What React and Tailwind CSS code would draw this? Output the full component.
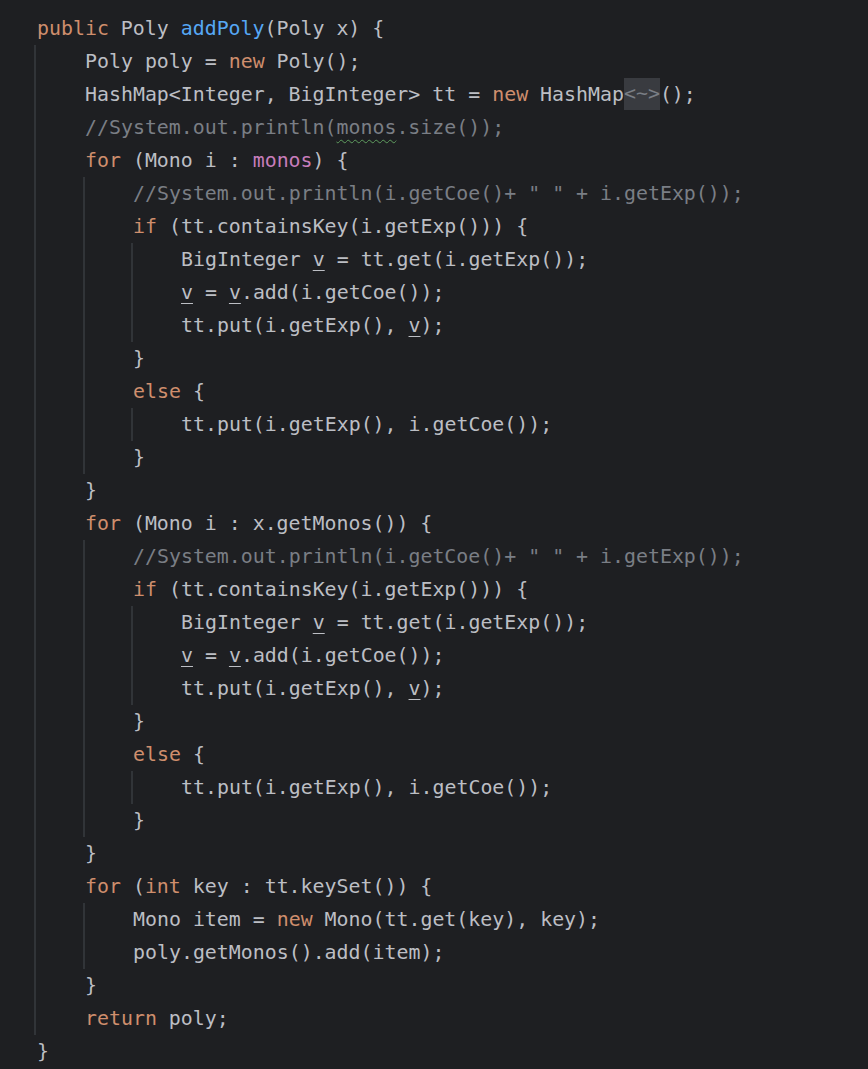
import React from "react";

const K = ({ children }) => <span className="text-[#cf8e6d]">{children}</span>;
const F = ({ children }) => <span className="text-[#56a8f5]">{children}</span>;
const C = ({ children }) => <span className="text-[#7a7e85]">{children}</span>;
const P = ({ children }) => <span className="text-[#c77dbb]">{children}</span>;
const U = ({ children }) => (
  <span className="underline decoration-1 underline-offset-[4px] decoration-[#bcbec4]">{children}</span>
);
const W = ({ children }) => (
  <span className="underline decoration-wavy decoration-1 underline-offset-[5px] decoration-[#5e9c5e]">{children}</span>
);
const Hint = ({ children }) => (
  <span className="inline-block h-[32px] leading-[32px] bg-[#393b40] text-[#7a7e85] align-top">{children}</span>
);

const L = ({ children }) => <div className="h-[33px] leading-[33px] whitespace-pre">{children}</div>;

const Block = ({ children, first }) => (
  <div className={(first ? "ml-[-3px] pl-[49px]" : "ml-[-2px] pl-[48px]") + " border-l-2 border-[#313438]"}>
    {children}
  </div>
);

const Loop = ({ head }) => (
  <>
    <L>
      <K>for</K> {head} {"{"}
    </L>
    <Block>
      <L>
        <C>//System.out.println(i.getCoe()+ " " + i.getExp());</C>
      </L>
      <L>
        <K>if</K> (tt.containsKey(i.getExp())) {"{"}
      </L>
      <Block>
        <L>
          BigInteger <U>v</U> = tt.get(i.getExp());
        </L>
        <L>
          <U>v</U> = <U>v</U>.add(i.getCoe());
        </L>
        <L>
          tt.put(i.getExp(), <U>v</U>);
        </L>
      </Block>
      <L>{"}"}</L>
      <L>
        <K>else</K> {"{"}
      </L>
      <Block>
        <L>tt.put(i.getExp(), i.getCoe());</L>
      </Block>
      <L>{"}"}</L>
    </Block>
    <L>{"}"}</L>
  </>
);

export default function App() {
  return (
    <div
      className="w-full h-[1069px] overflow-hidden bg-[#1e1f22] text-[#bcbec4] text-[19.9px] pt-[12px] pl-[37px]"
      style={{ fontFamily: '"DejaVu Sans Mono", "Liberation Mono", monospace' }}
    >
      <L>
        <K>public</K> Poly <F>addPoly</F>(Poly x) {"{"}
      </L>
      <Block first>
        <L>
          Poly poly = <K>new</K> Poly();
        </L>
        <L>
          HashMap{"<"}Integer, BigInteger{">"} tt = <K>new</K> HashMap<Hint>{"<~>"}</Hint>();
        </L>
        <L>
          <C>
            //System.out.println(<W>monos</W>.size());
          </C>
        </L>
        <Loop head={<>(Mono i : <P>monos</P>)</>} />
        <Loop head={<>(Mono i : x.getMonos())</>} />
        <L>
          <K>for</K> (<K>int</K> key : tt.keySet()) {"{"}
        </L>
        <Block>
          <L>
            Mono item = <K>new</K> Mono(tt.get(key), key);
          </L>
          <L>poly.getMonos().add(item);</L>
        </Block>
        <L>{"}"}</L>
        <L>
          <K>return</K> poly;
        </L>
      </Block>
      <L>{"}"}</L>
    </div>
  );
}
